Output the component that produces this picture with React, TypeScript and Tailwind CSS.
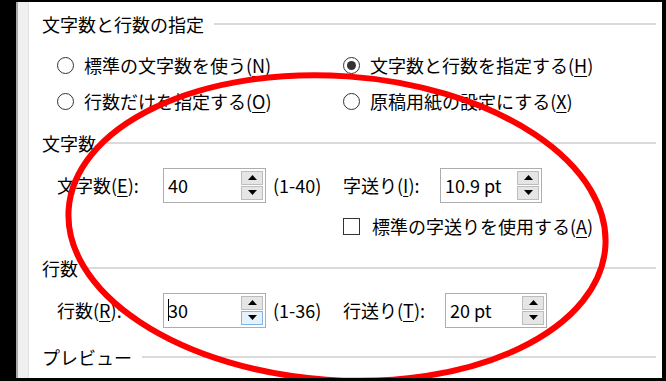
import React from "react";

const font = { fontFamily: '"Noto Sans CJK JP", "Noto Sans", sans-serif' };

function Heading({ text, className }: { text: string; className?: string }) {
  return (
    <div className={`flex h-[28px] items-center pl-[13px] pr-[6px] ${className ?? ""}`}>
      <span className="whitespace-nowrap">{text}</span>
      <div className="ml-[10px] h-[2px] flex-1 bg-[#dadada]" />
    </div>
  );
}

function Key({ k }: { k: string }) {
  return (
    <>
      (<span className="underline decoration-1 underline-offset-[3px]">{k}</span>)
    </>
  );
}

function Radio({ checked, label, k }: { checked?: boolean; label: string; k: string }) {
  return (
    <div className="flex items-center gap-[10px] whitespace-nowrap">
      <span className="flex h-[17px] w-[17px] shrink-0 items-center justify-center rounded-full border-[1.5px] border-[#333] bg-white">
        {checked && <span className="h-[9px] w-[9px] rounded-full bg-[#333]" />}
      </span>
      <span>
        {label}
        <Key k={k} />
      </span>
    </div>
  );
}

function SpinBox({
  value,
  width,
  cursor,
  hoverDown,
}: {
  value: string;
  width: string;
  cursor?: boolean;
  hoverDown?: boolean;
}) {
  return (
    <div className={`flex h-[35px] items-stretch border border-[#adadad] bg-white ${width}`}>
      <div className="flex flex-1 items-center pl-[4px]">
        {cursor && <span className="mr-[-1px] h-[22px] w-[1px] bg-black" />}
        <span>{value}</span>
      </div>
      <div className="flex w-[24px] flex-col gap-[1px] py-[2px] pr-[2px]">
        <div className="flex flex-1 items-center justify-center border border-[#bdbdbd] bg-[#e5e5e5]">
          <svg width="9" height="5" viewBox="0 0 9 5">
            <path d="M0 5 L4.5 0 L9 5 Z" fill="#000" />
          </svg>
        </div>
        <div
          className={`flex flex-1 items-center justify-center border ${
            hoverDown ? "border-[#7eb4ea] bg-[#e5f1fb]" : "border-[#bdbdbd] bg-[#e5e5e5]"
          }`}
        >
          <svg width="9" height="5" viewBox="0 0 9 5">
            <path d="M0 0 L4.5 5 L9 0 Z" fill="#000" />
          </svg>
        </div>
      </div>
    </div>
  );
}

export default function App() {
  return (
    <div
      className="flex h-[381px] w-[666px] overflow-hidden bg-black pb-[3px] pl-[16px] pr-[4px] pt-[2px] text-[18px] text-black"
      style={font}
    >
      {/* left gutter */}
      <div className="w-[2px] bg-[#a8a8a8]" />
      <div className="w-[11px] border-r border-[#e2e2e2] bg-[#f0f0f0]" />

      {/* dialog body */}
      <div className="relative flex flex-1 flex-col overflow-hidden bg-white leading-[28px]">
        <Heading text="文字数と行数の指定" className="mt-[8px]" />

        <div className="mt-[9px] flex h-[36px] items-center pl-[28px]">
          <div className="w-[286px]">
            <Radio label="標準の文字数を使う" k="N" />
          </div>
          <Radio checked label="文字数と行数を指定する" k="H" />
        </div>
        <div className="flex h-[36px] items-center pl-[28px]">
          <div className="w-[286px]">
            <Radio label="行数だけを指定する" k="O" />
          </div>
          <Radio label="原稿用紙の設定にする" k="X" />
        </div>

        <Heading text="文字数" className="mt-[10px]" />

        <div className="mt-[10px] flex h-[36px] items-center pl-[28px]">
          <div className="flex w-[286px] items-center">
            <span className="w-[106px] whitespace-nowrap">
              文字数<Key k="E" />:
            </span>
            <SpinBox value="40" width="w-[103px]" />
            <span className="ml-[7px]">(1-40)</span>
          </div>
          <span className="w-[97px] whitespace-nowrap">
            字送り<Key k="I" />:
          </span>
          <SpinBox value="10.9 pt" width="w-[102px]" />
        </div>

        <div className="mt-[5px] flex h-[36px] items-center pl-[314px]">
          <div className="flex items-center gap-[12px] whitespace-nowrap">
            <span className="h-[17px] w-[17px] shrink-0 border-[1.5px] border-[#333] bg-white" />
            <span>
              標準の字送りを使用する<Key k="A" />
            </span>
          </div>
        </div>

        <Heading text="行数" className="mt-[10px]" />

        <div className="mt-[10px] flex h-[36px] items-center pl-[28px]">
          <div className="flex w-[286px] items-center">
            <span className="w-[106px] whitespace-nowrap">
              行数<Key k="R" />:
            </span>
            <SpinBox value="30" width="w-[103px]" cursor hoverDown />
            <span className="ml-[7px]">(1-36)</span>
          </div>
          <span className="w-[102px] whitespace-nowrap">
            行送り<Key k="T" />:
          </span>
          <SpinBox value="20 pt" width="w-[102px]" />
        </div>

        <Heading text="プレビュー" className="mt-[15px]" />

        {/* red annotation ellipse */}
        <svg className="pointer-events-none absolute left-0 top-0" width="633" height="376">
          <g transform="translate(-29,-2)">
            <ellipse
              cx="337"
              cy="228"
              rx="269"
              ry="152"
              transform="rotate(4 337 228)"
              fill="none"
              stroke="#ff0000"
              strokeWidth="6"
            />
          </g>
        </svg>
      </div>
    </div>
  );
}
